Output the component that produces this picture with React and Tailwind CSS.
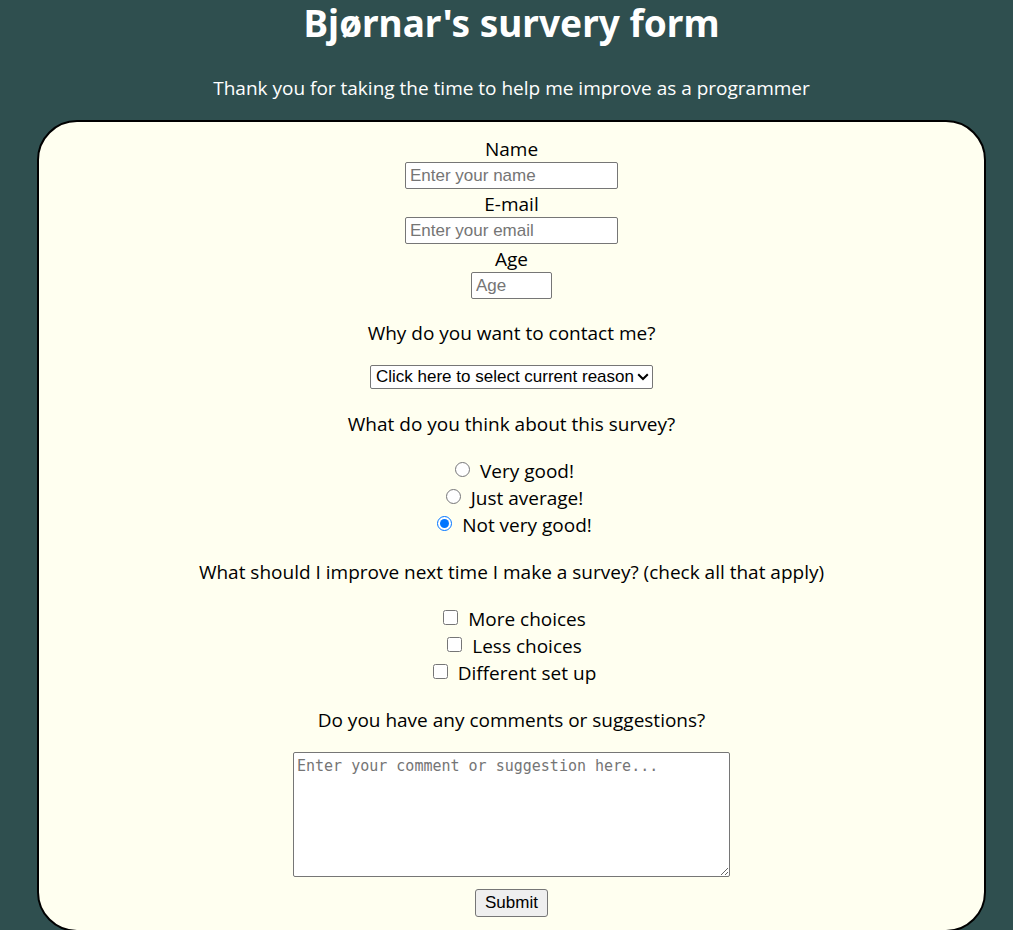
import React from "react";

const fields = [
  { id: "name", label: "Name", type: "text", placeholder: "Enter your name", width: "w-[213px]" },
  { id: "email", label: "E-mail", type: "email", placeholder: "Enter your email", width: "w-[213px]" },
  { id: "age", label: "Age", type: "number", placeholder: "Age", width: "w-[81px]" },
];

const ratings = ["Very good!", "Just average!", "Not very good!"];
const improvements = ["More choices", "Less choices", "Different set up"];

function Choice({ type, name, label, defaultChecked }) {
  return (
    <label className="flex items-center gap-2.5 pl-1.5">
      <input
        type={type}
        name={name}
        value={label}
        defaultChecked={defaultChecked}
        className="mb-1 size-[15px]"
      />
      {label}
    </label>
  );
}

function Choices({ legend, children }) {
  return (
    <fieldset className="mt-5 flex flex-col items-center">
      <legend className="mx-auto mb-5">{legend}</legend>
      {children}
    </fieldset>
  );
}

export default function App() {
  return (
    <div className="min-h-screen bg-[#2f4f4f] pr-[27px] pl-[37px] text-center font-['Open_Sans','Noto_Sans',sans-serif] text-[19px] leading-[27px]">
      <header className="text-white">
        <h1 className="font-['Noto_Sans',sans-serif] text-[37px] leading-[46px] font-bold">
          Bjørnar's survery form
        </h1>
        <p className="pt-[29px] pb-[18px]">Thank you for taking the time to help me improve as a programmer</p>
      </header>
      <form
        className="flex flex-col items-center rounded-[40px] border-2 border-black bg-[#fffff0] pt-3.5 pb-[13px] text-black"
        onSubmit={(e) => e.preventDefault()}
      >
        <div className="flex flex-col items-center gap-0.5">
          {fields.map((f) => (
            <div key={f.id} className="flex flex-col items-center">
              <label htmlFor={f.id} className="leading-[26px]">
                {f.label}
              </label>
              <input
                id={f.id}
                type={f.type}
                placeholder={f.placeholder}
                className={`${f.width} h-[27px] rounded-xs border border-[#767676] bg-white px-1 font-['Liberation_Sans',sans-serif] text-[17px] leading-5 placeholder:text-[#757575]`}
              />
            </div>
          ))}
        </div>

        <label htmlFor="reason" className="mt-[21px]">
          Why do you want to contact me?
        </label>
        <div className="mt-[18px] mb-0.5 grid items-center">
          <select
            id="reason"
            className="col-start-1 row-start-1 h-6 appearance-none rounded-xs border border-[#767676] bg-white pr-[18px] pl-[5px] font-['Liberation_Sans',sans-serif] text-[17px] leading-5"
          >
            <option>Click here to select current reason</option>
          </select>
          <svg
            className="pointer-events-none col-start-1 row-start-1 mr-1 h-2 w-3 justify-self-end"
            viewBox="0 0 12 8"
            fill="none"
            stroke="black"
            strokeWidth="2"
            aria-hidden="true"
          >
            <path d="M1.2 1.2 6 6l4.8-4.8" />
          </svg>
        </div>

        <Choices legend="What do you think about this survey?">
          {ratings.map((r) => (
            <Choice key={r} type="radio" name="rating" label={r} defaultChecked={r === "Not very good!"} />
          ))}
        </Choices>

        <Choices legend="What should I improve next time I make a survey? (check all that apply)">
          {improvements.map((i) => (
            <Choice key={i} type="checkbox" name="improve" label={i} />
          ))}
        </Choices>

        <label htmlFor="comments" className="mt-5">
          Do you have any comments or suggestions?
        </label>
        <textarea
          id="comments"
          placeholder="Enter your comment or suggestion here..."
          className="mt-[18px] h-[125px] w-[437px] max-w-full resize rounded-xs border border-[#767676] bg-white px-[3px] py-0.5 font-['DejaVu_Sans_Mono',monospace] text-[15px] leading-[22px] placeholder:text-[#757575]"
        />
        <button
          type="submit"
          className="mt-3 h-7 rounded-[3px] border border-[#767676] bg-[#efefef] px-[9px] font-['Liberation_Sans',sans-serif] text-[17px] leading-5"
        >
          Submit
        </button>
      </form>
    </div>
  );
}
